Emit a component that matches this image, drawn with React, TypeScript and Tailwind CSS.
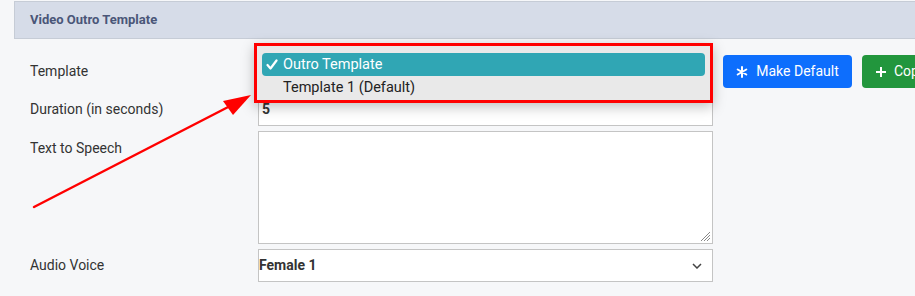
import React from 'react'

export default function App() {
  return (
    <div className="relative w-[915px] h-[296px] overflow-hidden bg-[#f6f7f9] font-['Roboto',sans-serif] text-[#333]">
      {/* Header */}
      <div className="ml-[14px] mt-[1px] h-[38px] w-[920px] bg-[#d6dce8] border border-[#c6ccd6] flex items-center pl-[15px]">
        <span className="text-[13px] font-bold text-[#4a5678]">Video Outro Template</span>
      </div>

      {/* Form */}
      <div className="mt-[16px] pl-[30px] flex flex-col gap-[5px]">
        <div className="flex items-center h-[33px] w-[1000px]">
          <label className="w-[228px] shrink-0 text-[14px]">Template</label>
          <div className="w-[455px] shrink-0 h-[33px] bg-white border border-[#c4c4c4]" />
          <button className="ml-[10px] shrink-0 h-[33px] w-[129px] rounded-[4px] bg-[#0d6efd] text-white text-[14px] flex items-center justify-center gap-[8px]">
            <svg width="12" height="12" viewBox="0 0 12 12" stroke="white" strokeWidth="2" strokeLinecap="round">
              <path d="M6 1v10M1.7 3.5l8.6 5M1.7 8.5l8.6-5" />
            </svg>
            Make Default
          </button>
          <button className="ml-[10px] h-[33px] w-[120px] shrink-0 rounded-[4px] bg-[#22963d] text-white text-[14px] flex items-center pl-[13px] gap-[7px]">
            <svg width="12" height="12" viewBox="0 0 12 12" stroke="white" strokeWidth="2">
              <path d="M6 1v10M1 6h10" />
            </svg>
            Copy
          </button>
        </div>

        <div className="flex items-center h-[33px]">
          <label className="w-[228px] shrink-0 text-[14px]">Duration (in seconds)</label>
          <div className="w-[455px] shrink-0 h-[33px] bg-white border border-[#c4c4c4] flex items-center pl-[3px] text-[14px] font-bold">5</div>
        </div>

        <div className="flex items-start h-[113px]">
          <label className="w-[228px] shrink-0 text-[14px] mt-[7px]">Text to Speech</label>
          <div className="relative w-[455px] shrink-0 h-[113px] bg-white border border-[#c4c4c4]">
            <svg className="absolute right-[1px] bottom-[1px]" width="12" height="12" viewBox="0 0 12 12" stroke="#888" strokeWidth="1">
              <path d="M11 2L2 11M11 5L5 11M11 8L8 11" />
            </svg>
          </div>
        </div>

        <div className="flex items-center h-[33px]">
          <label className="w-[228px] shrink-0 text-[14px]">Audio Voice</label>
          <div className="w-[455px] shrink-0 h-[33px] bg-white border border-[#c4c4c4] flex items-center justify-between pr-[10px] text-[14px] font-bold">
            <span>Female 1</span>
            <svg width="10" height="6" viewBox="0 0 10 6" fill="none" stroke="#444" strokeWidth="1.5">
              <path d="M1 1l4 4 4-4" />
            </svg>
          </div>
        </div>
      </div>

      {/* Open dropdown with red highlight */}
      <div className="absolute left-[254px] top-[43px] w-[459px] h-[60px] border-[3px] border-[#f00] bg-[#e9e9e9] shadow-[0_4px_12px_rgba(0,0,0,0.25)]">
        <div className="mt-[7px] mx-[5px] h-[23px] rounded-[4px] bg-[#30a6b4] text-white text-[14.5px] flex items-center pl-[4px]">
          <svg className="mr-[5px]" width="12" height="11" viewBox="0 0 12 11" fill="none" stroke="white" strokeWidth="2.2" strokeLinecap="round" strokeLinejoin="round">
            <path d="M1.5 6l3 3.5L10.5 1.5" />
          </svg>
          Outro Template
        </div>
        <div className="h-[23px] pl-[26px] text-[14.5px] text-[#222] flex items-center">Template 1 (Default)</div>
      </div>

      {/* Red arrow */}
      <svg className="absolute left-0 top-0" width="915" height="296">
        <line x1="34" y1="207" x2="234" y2="104" stroke="#f00" strokeWidth="2.5" strokeLinecap="round" />
        <polygon points="251,95 223,101 233,115" fill="#f00" />
      </svg>
    </div>
  )
}
